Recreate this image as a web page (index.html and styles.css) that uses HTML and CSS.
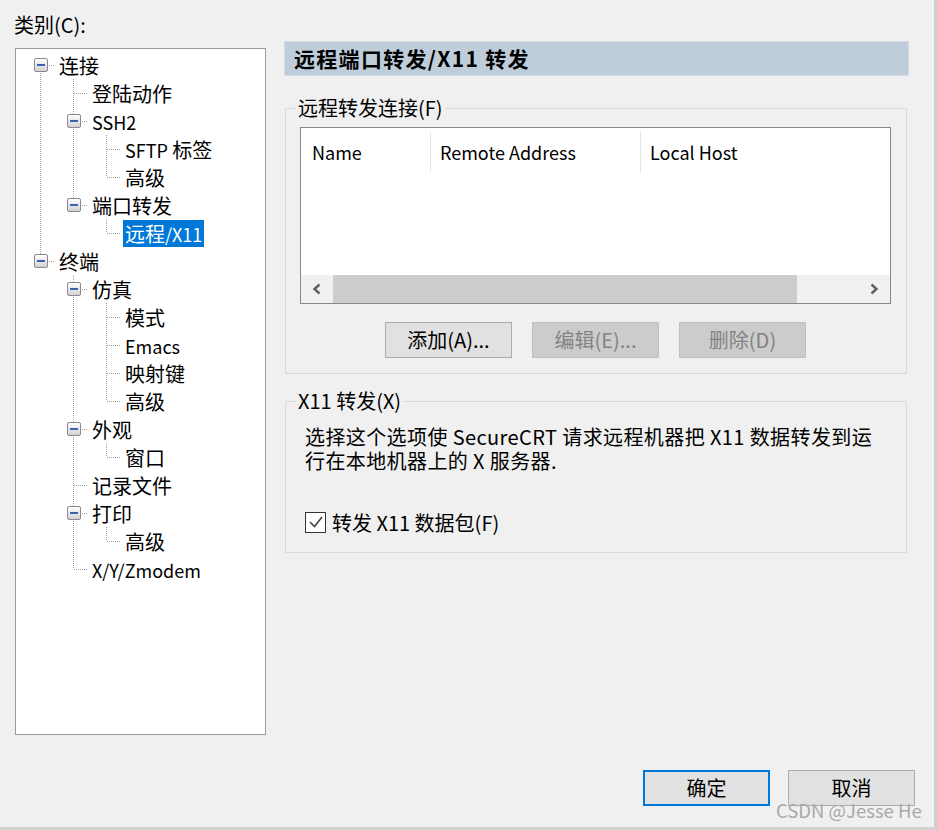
FILE: index.html
```
<!DOCTYPE html>
<html lang="zh-CN">
<head>
<meta charset="utf-8">
<title>会话选项</title>
<link rel="stylesheet" href="styles.css">
</head>
<body>
<div class="window">
  <div class="main">
    <div class="left">
      <div class="cat-label">类别(C):</div>
      <div class="tree">
        <div class="row"><span class="cell r"><span class="exp"></span></span><span class="label">连接</span></div>
        <div class="row"><span class="cell v"></span><span class="cell t"></span><span class="label">登陆动作</span></div>
        <div class="row"><span class="cell v"></span><span class="cell t"><span class="exp"></span></span><span class="label"><span class="en">SSH2</span></span></div>
        <div class="row"><span class="cell v"></span><span class="cell v"></span><span class="cell t"></span><span class="label"><span class="en">SFTP</span> 标签</span></div>
        <div class="row"><span class="cell v"></span><span class="cell v"></span><span class="cell l"></span><span class="label">高级</span></div>
        <div class="row"><span class="cell v"></span><span class="cell l"><span class="exp"></span></span><span class="label">端口转发</span></div>
        <div class="row"><span class="cell v"></span><span class="cell"></span><span class="cell l"></span><span class="label sel">远程<span class="en">/X11</span></span></div>
        <div class="row"><span class="cell l"><span class="exp"></span></span><span class="label">终端</span></div>
        <div class="row"><span class="cell"></span><span class="cell t"><span class="exp"></span></span><span class="label">仿真</span></div>
        <div class="row"><span class="cell"></span><span class="cell v"></span><span class="cell t"></span><span class="label">模式</span></div>
        <div class="row"><span class="cell"></span><span class="cell v"></span><span class="cell t"></span><span class="label"><span class="en">Emacs</span></span></div>
        <div class="row"><span class="cell"></span><span class="cell v"></span><span class="cell t"></span><span class="label">映射键</span></div>
        <div class="row"><span class="cell"></span><span class="cell v"></span><span class="cell l"></span><span class="label">高级</span></div>
        <div class="row"><span class="cell"></span><span class="cell t"><span class="exp"></span></span><span class="label">外观</span></div>
        <div class="row"><span class="cell"></span><span class="cell v"></span><span class="cell l"></span><span class="label">窗口</span></div>
        <div class="row"><span class="cell"></span><span class="cell t"></span><span class="label">记录文件</span></div>
        <div class="row"><span class="cell"></span><span class="cell t"><span class="exp"></span></span><span class="label">打印</span></div>
        <div class="row"><span class="cell"></span><span class="cell v"></span><span class="cell l"></span><span class="label">高级</span></div>
        <div class="row"><span class="cell"></span><span class="cell l"></span><span class="label"><span class="en">X/Y/Zmodem</span></span></div>
      </div>
    </div>
    <div class="right">
      <div class="title">远程端口转发/X11 转发</div>
      <fieldset class="group group-fwd">
        <legend>远程转发连接(F)</legend>
        <div class="list">
          <div class="list-head">
            <div class="col col-name">Name</div>
            <div class="col col-remote">Remote Address</div>
            <div class="col col-local">Local Host</div>
          </div>
          <div class="list-body"></div>
          <div class="hscroll">
            <div class="arrow"><svg width="10" height="12" viewBox="0 0 10 12"><polyline points="7.5,1.5 2.5,6 7.5,10.5" fill="none" stroke="#606060" stroke-width="2.4"/></svg></div>
            <div class="track"><div class="thumb"></div></div>
            <div class="arrow"><svg width="10" height="12" viewBox="0 0 10 12"><polyline points="2.5,1.5 7.5,6 2.5,10.5" fill="none" stroke="#606060" stroke-width="2.4"/></svg></div>
          </div>
        </div>
        <div class="btn-row">
          <button class="btn">添加(A)...</button>
          <button class="btn disabled">编辑(E)...</button>
          <button class="btn disabled">删除(D)</button>
        </div>
      </fieldset>
      <fieldset class="group group-x11">
        <legend>X11 转发(X)</legend>
        <p class="desc">选择这个选项使 SecureCRT 请求远程机器把 X11 数据转发到运<br>行在本地机器上的 X 服务器.</p>
        <div class="check-row">
          <span class="checkbox"><svg width="18" height="18" viewBox="0 0 18 18"><polyline points="3,9 7.5,13.5 15,4" fill="none" stroke="#444" stroke-width="1.6"/></svg></span>
          <span>转发 X11 数据包(F)</span>
        </div>
      </fieldset>
    </div>
  </div>
  <div class="footer">
    <button class="btn default">确定</button>
    <button class="btn">取消</button>
  </div>
  <div class="watermark">CSDN @Jesse He</div>
</div>
</body>
</html>
```

FILE: styles.css
```
html, body {
  margin: 0;
  padding: 0;
  background: #f0f0f0;
}

body {
  font-family: "Noto Sans CJK SC", "Noto Sans", sans-serif;
  font-size: 20px;
  color: #000;
}

.window {
  position: relative;
  width: 934px;
  height: 827px;
  border-right: 3px solid #cdcdcd;
  border-bottom: 3px solid #d2d2d2;
  background: #f0f0f0;
}

.main {
  display: flex;
  align-items: flex-start;
}

.left {
  margin-left: 14px;
  width: 252px;
  padding-top: 12px;
}

.cat-label {
  line-height: 26px;
  height: 26px;
}

.tree {
  margin-top: 10px;
  margin-left: 1px;
  width: 251px;
  height: 687px;
  box-sizing: border-box;
  border: 1px solid #9c9c9c;
  background: #fff;
  padding: 2px 0 0 8px;
}

.row {
  display: flex;
  align-items: center;
  height: 28px;
}

.cell {
  flex: none;
  width: 33px;
  height: 28px;
  display: flex;
  align-items: center;
}

.v {
  background: repeating-linear-gradient(to bottom, #a0a0a0 0 1px, transparent 1px 2px) 16px 0 / 1px 100% no-repeat;
}

.t {
  background:
    repeating-linear-gradient(to right, #a0a0a0 0 1px, transparent 1px 2px) 17px 14px / 14px 1px no-repeat,
    repeating-linear-gradient(to bottom, #a0a0a0 0 1px, transparent 1px 2px) 16px 0 / 1px 100% no-repeat;
}

.l {
  background:
    repeating-linear-gradient(to right, #a0a0a0 0 1px, transparent 1px 2px) 17px 14px / 14px 1px no-repeat,
    repeating-linear-gradient(to bottom, #a0a0a0 0 1px, transparent 1px 2px) 16px 0 / 1px 14px no-repeat;
}

.r {
  background:
    repeating-linear-gradient(to right, #a0a0a0 0 1px, transparent 1px 2px) 17px 14px / 14px 1px no-repeat,
    repeating-linear-gradient(to bottom, #a0a0a0 0 1px, transparent 1px 2px) 16px 14px / 1px 14px no-repeat;
}

.exp {
  margin-left: 10px;
  width: 14px;
  height: 14px;
  box-sizing: border-box;
  border: 1px solid #8a8a8a;
  border-radius: 2px;
  background: linear-gradient(#ffffff, #d2d2d2);
  display: flex;
  align-items: center;
  justify-content: center;
}

.exp::before {
  content: "";
  width: 8px;
  height: 2px;
  background: #3a62b0;
}

.label {
  height: 27px;
  line-height: 27px;
  padding: 0 2px;
  white-space: nowrap;
}

.label.sel {
  background: #0078d7;
  color: #fff;
}

.en {
  font-size: 18px;
}

.right {
  margin-left: 18px;
  width: 625px;
  padding-top: 41px;
}

.title {
  height: 35px;
  box-sizing: border-box;
  background: #bfcddb;
  border: 1px solid #d2dce7;
  padding-left: 9px;
  font-size: 21px;
  font-weight: bold;
  line-height: 33px;
  letter-spacing: 1.3px;
  white-space: nowrap;
}

.group {
  margin: 0 2px 0 1px;
  border: 1px solid #dadada;
  min-width: 0;
}

.group legend {
  padding: 0 2px;
  line-height: 26px;
  font-size: 20px;
}

.group-fwd {
  margin-top: 19px;
  padding: 6px 15px 15px 10px;
}

.group-x11 {
  margin-top: 14px;
  padding: 11px 15px 17px 10px;
}

.list {
  margin-left: 4px;
  height: 177px;
  box-sizing: border-box;
  border: 1px solid #828790;
  background: #fff;
  display: flex;
  flex-direction: column;
}

.list-head {
  display: flex;
  padding-top: 4px;
  font-size: 18px;
}

.col {
  height: 40px;
  line-height: 40px;
  box-sizing: border-box;
  white-space: nowrap;
}

.col-name {
  width: 130px;
  padding-left: 11px;
  border-right: 1px solid #e5e5e5;
}

.col-remote {
  width: 210px;
  padding-left: 9px;
  border-right: 1px solid #e5e5e5;
}

.col-local {
  flex: 1;
  padding-left: 9px;
}

.list-body {
  flex: 1;
}

.hscroll {
  height: 28px;
  display: flex;
  background: #f0f0f0;
}

.arrow {
  width: 32px;
  display: flex;
  align-items: center;
  justify-content: center;
}

.track {
  flex: 1;
  display: flex;
}

.thumb {
  width: 464px;
  background: #cdcdcd;
}

.btn-row {
  margin-top: 18px;
  margin-left: 4px;
  display: flex;
  justify-content: center;
  gap: 20px;
}

.btn {
  width: 127px;
  height: 36px;
  box-sizing: border-box;
  margin: 0;
  padding: 0;
  border: 1px solid #adadad;
  background: #e1e1e1;
  font-family: inherit;
  font-size: 20px;
  line-height: 32px;
  color: #000;
  text-align: center;
}

.btn.disabled {
  background: #cccccc;
  border-color: #bfbfbf;
  color: #838383;
}

.btn.default {
  border: 2px solid #0078d7;
}

.desc {
  margin: 0 0 0 9px;
  line-height: 24px;
  letter-spacing: 0.4px;
  white-space: nowrap;
}

.check-row {
  margin: 36px 0 0 9px;
  height: 26px;
  display: flex;
  align-items: center;
  gap: 6px;
}

.checkbox {
  width: 21px;
  height: 21px;
  box-sizing: border-box;
  border: 1px solid #333;
  background: #fff;
  display: flex;
  align-items: center;
  justify-content: center;
}

.footer {
  margin-top: 35px;
  padding-right: 19px;
  display: flex;
  justify-content: flex-end;
  gap: 18px;
}

.watermark {
  position: absolute;
  left: 776px;
  top: 798px;
  font-family: "Noto Sans CJK SC", sans-serif;
  font-size: 18.5px;
  line-height: 24px;
  color: #a9a9a9;
  white-space: nowrap;
}
```
